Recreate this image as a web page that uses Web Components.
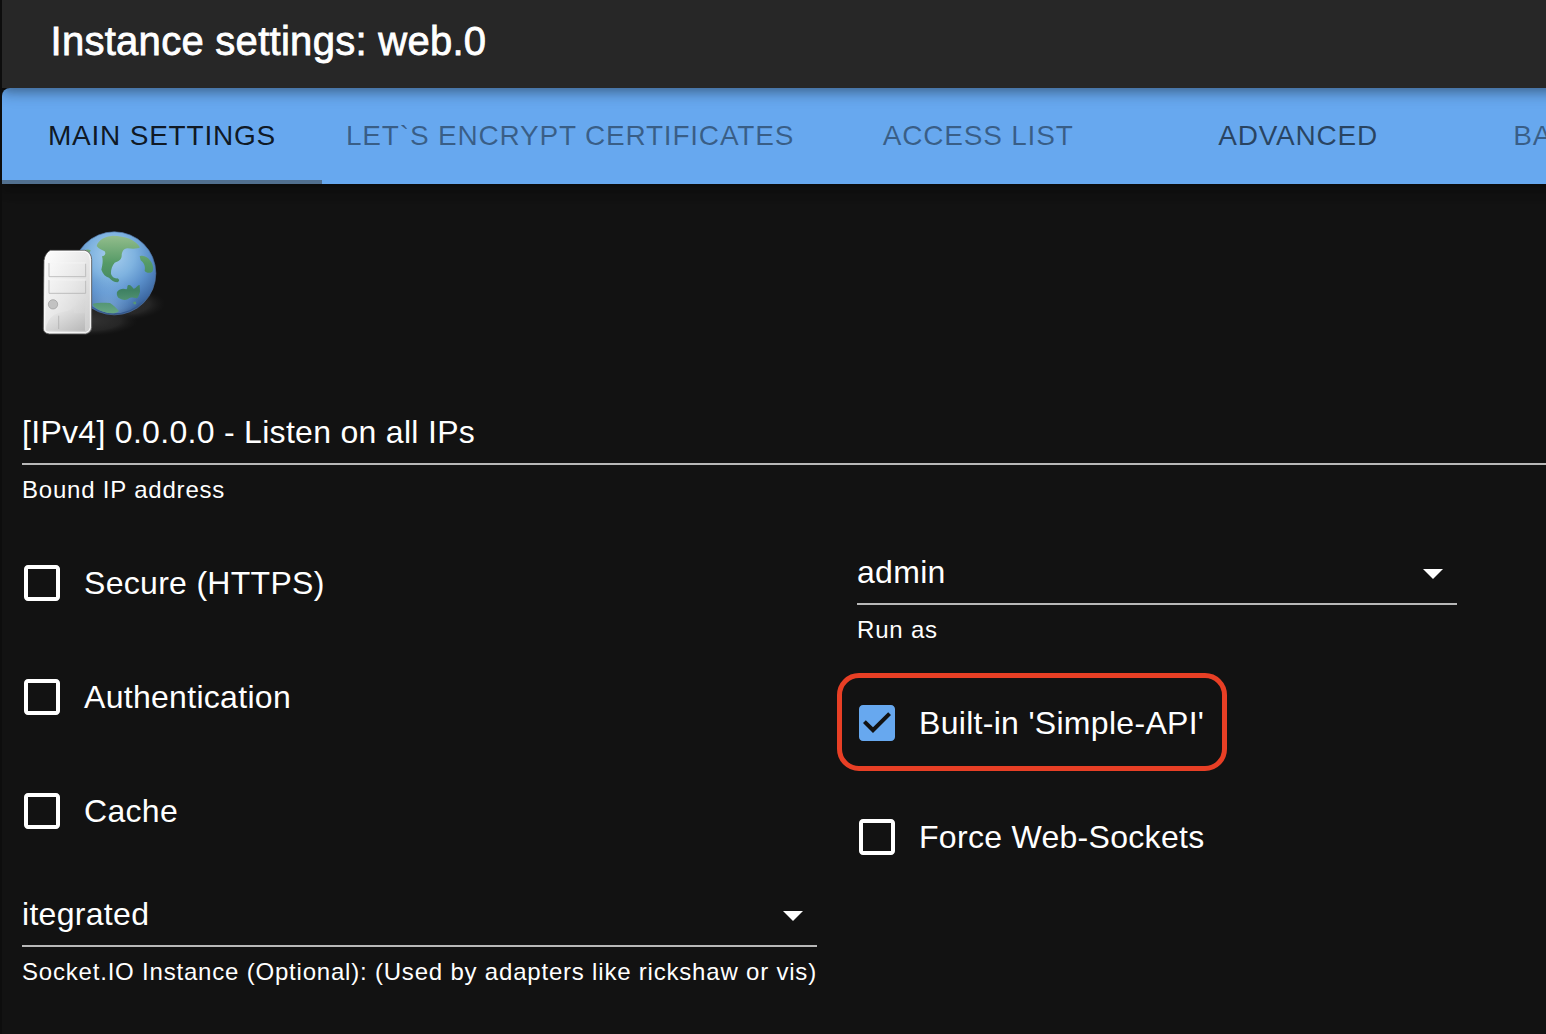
<!DOCTYPE html>
<html lang="en">
<head>
<meta charset="utf-8">
<title>Instance settings: web.0</title>
<style>
html, body { margin: 0; height: 100%; overflow: hidden; background: #121212; }
body { font-family: "Liberation Sans", Helvetica, Arial, sans-serif; color: #fff; }
</style>
</head>
<body>
<settings-page></settings-page>
<script>
const define = (name, html, setup) => customElements.define(name, class extends HTMLElement {
  connectedCallback() {
    if (this.shadowRoot) return;
    this.attachShadow({ mode: 'open' }).innerHTML = html;
    if (setup) setup(this, this.shadowRoot);
  }
});

define('title-bar', `
<style>
:host { display: flex; align-items: center; box-sizing: border-box; height: 88px; margin-right: -40px; padding: 0 48px 7px 48.5px; background: #272727; position: relative; z-index: 2; clip-path: inset(0 0 -50px 0);
  box-shadow: 0 4px 8px -2px rgba(0,0,0,.2), 0 8px 10px rgba(0,0,0,.14), 0 2px 20px rgba(0,0,0,.12); }
h1 { margin: 0; font-size: 40px; font-weight: 400; letter-spacing: .28px; line-height: 64px; white-space: nowrap; -webkit-text-stroke: .8px #fff; }
</style><h1><slot></slot></h1>`);

define('tab-bar', `
<style>
:host { display: flex; height: 96px; margin-right: -40px; background: #67a8ef; border-radius: 8px 0 0 0; overflow: hidden; position: relative;
  box-shadow: 0 4px 8px -2px rgba(0,0,0,.2), 0 8px 10px rgba(0,0,0,.14), 0 2px 20px rgba(0,0,0,.12); }
</style><slot></slot>`);

define('tab-item', `
<style>
:host { display: flex; flex: 0 0 auto; box-sizing: border-box; min-width: 320px; height: 96px; padding: 3px 24px 0; align-items: center; justify-content: center; font-size: 28px; letter-spacing: .8px; line-height: 35px; white-space: nowrap; color: rgba(0,0,0,.6); border-bottom: 4px solid transparent; }
:host([selected]) { color: rgba(0,0,0,.87); border-bottom-color: #52708f; }
:host([disabled]) { color: rgba(0,0,0,.435); }
:host([cut]) { justify-content: flex-start; padding-left: 55px; }
</style><span><slot></slot></span>`);

define('server-icon', `
<style>:host { display: block; width: 150px; height: 125px; } svg { display: block; }</style>
<svg width="150" height="125" viewBox="0 0 450 375">
<defs>
<radialGradient id="ocean" cx=".47" cy=".28" r=".78"><stop offset="0" stop-color="#a9cfee"/><stop offset=".35" stop-color="#7fb3e0"/><stop offset=".6" stop-color="#5a8fca"/><stop offset=".84" stop-color="#3d69a3"/><stop offset="1" stop-color="#1d3664"/></radialGradient>
<radialGradient id="shine" cx=".42" cy=".95" r=".4"><stop offset="0" stop-color="#b6e0ff" stop-opacity=".45"/><stop offset="1" stop-color="#9acbff" stop-opacity="0"/></radialGradient>
<linearGradient id="land" gradientUnits="userSpaceOnUse" x1="0" y1="47" x2="0" y2="282"><stop offset="0" stop-color="#93bd8c"/><stop offset=".35" stop-color="#559a66"/><stop offset=".7" stop-color="#3f8163"/><stop offset="1" stop-color="#68a884"/></linearGradient>
<linearGradient id="case" x1="0" y1="0" x2="1" y2="1"><stop offset="0" stop-color="#fff"/><stop offset=".5" stop-color="#e8e8e8"/><stop offset="1" stop-color="#cacaca"/></linearGradient>
<linearGradient id="side" x1="0" y1="0" x2="1" y2="1"><stop offset="0" stop-color="#f2f2f2"/><stop offset="1" stop-color="#b8b8b8"/></linearGradient>
<linearGradient id="foot" x1="0" y1="0" x2="1" y2="1"><stop offset="0" stop-color="#fff"/><stop offset="1" stop-color="#bcbcbc"/></linearGradient>
<radialGradient id="shadow"><stop offset="0" stop-color="#333"/><stop offset=".65" stop-color="#262626"/><stop offset="1" stop-color="#1a1a1a" stop-opacity="0"/></radialGradient>
<clipPath id="disc"><circle cx="253" cy="160" r="124"/></clipPath>
</defs>
<ellipse cx="270" cy="252" rx="136" ry="50" fill="url(#shadow)"/>
<ellipse cx="175" cy="302" rx="148" ry="46" fill="url(#shadow)"/>
<circle cx="253" cy="160" r="124.5" fill="url(#ocean)" stroke="#5276a6" stroke-width="2"/>
<circle cx="253" cy="160" r="120" fill="url(#shine)"/>
<g clip-path="url(#disc)" fill="url(#land)">
<path d="M200 78C205 59 225 49 248 47C286 48 317 59 330 82C324 87 307 87 293 85C279 86 275 97 275 109C274 120 263 126 254 128C246 137 242 151 243 162C246 171 253 176 262 175C269 178 269 183 263 187C252 187 244 180 237 173C227 171 219 162 214 149C217 136 220 122 216 109C226 108 228 99 224 94C216 90 207 87 200 78Z"/>
<path d="M329 109C341 104 354 113 361 122C369 132 372 146 367 155C359 161 348 159 344 152C347 139 342 128 332 121Z"/>
<path d="M261 216C268 206 280 205 289 208C294 206 290 200 294 196C300 192 306 200 311 206C319 206 321 195 329 195L330 216C326 226 326 232 320 235C309 233 303 231 297 235C288 244 274 239 265 233C260 228 260 220 261 216Z"/>
<path d="M188 251C205 247 222 249 240 249C250 255 260 265 267 273C258 282 239 281 223 276C203 269 189 260 188 251Z"/>
<path d="M308 248l8-4 3 6-4 4zM164 91q8-5 18 0l-3 7h-16z"/>
</g>
<path d="M61 91H165Q184 96 185 119V323Q184 337 168 342H58Q41 340 40 327L42 121Q46 98 61 91Z" fill="url(#case)" stroke="#555" stroke-width="2.5"/>
<path d="M62 94H164Q180 100 181 120V322Q180 334 167 338H59Q45 337 44 326L46 121Q49 101 62 94Z" fill="none" stroke="#fff" stroke-width="3" opacity=".85"/>
<path d="M46 332Q49 299 73 284Q91 276 111 273Q134 265 148 235Q159 219 167 220L164 332Z" fill="url(#foot)" opacity=".4"/>
<path d="M132 280H165V332H48Q48 300 73 284Q92 275 112 273Q124 270 132 262Z" fill="url(#side)"/>
<path d="M57 129V170H167V131M57 180V220H167V182" fill="none" stroke="#b5b5b5" stroke-width="2.5"/>
<path d="M58 129H167M58 180H167" stroke="#f8f8f8" stroke-width="2"/>
<path d="M86 287V327" stroke="#a9a9a9" stroke-width="2"/>
<circle cx="69" cy="253" r="14" fill="#c2c2c2" stroke="#999" stroke-width="2"/>
</svg>`);

define('select-field', `
<style>
:host { display: block; }
.control { display: flex; align-items: flex-start; box-sizing: border-box; height: 64px; padding-top: 8px; border-bottom: 2px solid #b8b8b8; }
.value { flex: 1; font-size: 32px; letter-spacing: .3px; line-height: 46px; white-space: nowrap; }
svg { width: 48px; height: 48px; fill: #fff; flex: none; }
:host([plain]) svg { display: none; }
.hint { margin-top: 5px; padding-bottom: 1px; font-size: 24px; letter-spacing: .8px; line-height: 40px; height: 40px; white-space: nowrap; }
</style>
<div class="control"><span class="value"><slot></slot></span><svg viewBox="0 0 24 24"><path d="M7 10l5 5 5-5z"/></svg></div>
<div class="hint"><slot name="hint"></slot></div>`);

define('check-box', `
<style>
:host { display: flex; align-items: center; gap: 18px; height: 84px; margin-left: -4px; position: relative; }
svg { width: 48px; height: 48px; fill: #fff; flex: none; }
:host([checked]) svg { fill: #67a8ef; }
span { font-size: 32px; letter-spacing: .3px; line-height: 48px; white-space: nowrap; }
:host([highlight])::after { content: ""; position: absolute; box-sizing: border-box; left: -16px; top: -8px; width: 390px; height: 98px; border: 5px solid #e83f25; border-radius: 22px; }
</style>
<svg viewBox="0 0 24 24"><path/></svg><span><slot></slot></span>`, (el, root) => {
  root.querySelector('path').setAttribute('d', el.hasAttribute('checked')
    ? 'M19 3H5c-1.11 0-2 .9-2 2v14c0 1.1.89 2 2 2h14c1.11 0 2-.9 2-2V5c0-1.1-.89-2-2-2zm-9 14l-5-5 1.41-1.41L10 14.17l7.59-7.59L19 8l-9 9z'
    : 'M19 5v14H5V5h14m0-2H5c-1.1 0-2 .9-2 2v14c0 1.1.9 2 2 2h14c1.1 0 2-.9 2-2V5c0-1.1-.9-2-2-2z');
});

define('settings-page', `
<style>
:host { display: block; box-sizing: border-box; width: 1546px; height: 1034px; border-left: 2px solid #0d0d0d; overflow: hidden; background: #121212; }
server-icon { margin: 36px 0 0 28px; }
main { margin: 56px 0 0 20px; }
.columns { display: flex; gap: 40px; margin-top: 30px; }
.column { display: flex; flex-direction: column; gap: 30px; width: 795px; flex: none; }
.column + .column { width: 600px; }
</style>
<title-bar>Instance settings: web.0</title-bar>
<tab-bar>
<tab-item selected>MAIN SETTINGS</tab-item><tab-item disabled>LET\`S ENCRYPT CERTIFICATES</tab-item><tab-item disabled>ACCESS LIST</tab-item><tab-item>ADVANCED</tab-item><tab-item disabled cut>BA</tab-item>
</tab-bar>
<server-icon></server-icon>
<main>
<select-field plain>[IPv4] 0.0.0.0 - Listen on all IPs<span slot="hint">Bound IP address</span></select-field>
<div class="columns">
<div class="column">
<check-box>Secure (HTTPS)</check-box>
<check-box>Authentication</check-box>
<check-box>Cache</check-box>
<select-field>itegrated<span slot="hint">Socket.IO Instance (Optional): (Used by adapters like rickshaw or vis)</span></select-field>
</div>
<div class="column">
<select-field>admin<span slot="hint">Run as</span></select-field>
<check-box checked highlight>Built-in 'Simple-API'</check-box>
<check-box>Force Web-Sockets</check-box>
</div>
</div>
</main>`);
</script>
</body>
</html>
